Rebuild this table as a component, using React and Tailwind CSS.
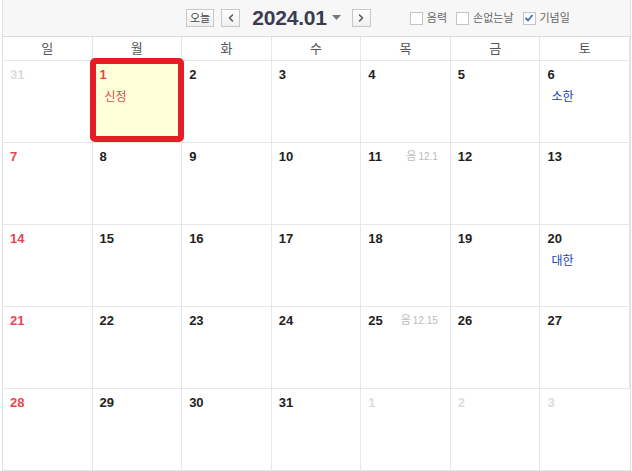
import { ChevronLeft, ChevronRight } from 'lucide-react';

const days = ['일', '월', '화', '수', '목', '금', '토'];

const weeks = [
  [{ d: 31, out: true }, { d: 1, holiday: '신정', today: true }, { d: 2 }, { d: 3 }, { d: 4 }, { d: 5 }, { d: 6, memo: '소한' }],
  [{ d: 7 }, { d: 8 }, { d: 9 }, { d: 10 }, { d: 11, lunar: '12.1' }, { d: 12 }, { d: 13 }],
  [{ d: 14 }, { d: 15 }, { d: 16 }, { d: 17 }, { d: 18 }, { d: 19 }, { d: 20, memo: '대한' }],
  [{ d: 21 }, { d: 22 }, { d: 23 }, { d: 24 }, { d: 25, lunar: '12.15' }, { d: 26 }, { d: 27 }],
  [{ d: 28 }, { d: 29 }, { d: 30 }, { d: 31 }, { d: 1, out: true }, { d: 2, out: true }, { d: 3, out: true }],
];

const Check = ({ checked, label }) => (
  <label className="flex items-center gap-[4px] text-[11px] text-[#666]">
    <span className="w-[13px] h-[13px] border border-[#c4c4c4] bg-white flex items-center justify-center">
      {checked && (
        <svg width="10" height="10" viewBox="0 0 10 10">
          <path d="M1.5 5 L4 7.5 L8.5 2" fill="none" stroke="#3d6fb8" strokeWidth="1.8" />
        </svg>
      )}
    </span>
    {label}
  </label>
);

const Cell = ({ cell, col }) => {
  let color = 'text-[#222]';
  if (cell.out) color = 'text-[#ddd]';
  else if (col === 0 || cell.holiday) color = 'text-[#e8454f]';

  return (
    <div className="relative h-[82px] border-r border-b border-[#e6e6e6] last:border-r-0">
      {cell.today && (
        <div className="absolute left-[-3px] top-[-3px] w-[94px] h-[84px] border-[6px] border-[#e51e25] rounded-[5px] bg-[#ffffd9]" />
      )}
      <div className="relative pl-[7px] pt-[4px] flex items-start justify-between pr-[12px]">
        <span className={`text-[13px] font-bold ${color}`}>{cell.d}</span>
        {cell.lunar && (
          <span className="text-[#bbb] mt-[1px] flex items-baseline gap-[2px]">
            <span className="text-[11px]">음</span>
            <span className="text-[10px]">{cell.lunar}</span>
          </span>
        )}
      </div>
      {cell.holiday && (
        <div className="relative pl-[12px] mt-[3px] text-[12px] text-[#e8454f]">{cell.holiday}</div>
      )}
      {cell.memo && (
        <div className="relative pl-[11px] mt-[3px] text-[12px] text-[#2142b8]">{cell.memo}</div>
      )}
    </div>
  );
};

const App = () => {
  return (
    <div
      className="w-[632px] h-[471px] bg-white overflow-hidden"
      style={{ fontFamily: '"Liberation Sans", "Noto Sans CJK KR", sans-serif' }}
    >
      <div className="ml-[2px] w-[629px] border-l border-r border-b border-[#e0e0e0]">
        <div className="h-[37px] bg-[#f7f7f7] border-b border-[#dcdcdc] flex items-center">
          <div className="ml-[183px] flex items-center">
            <button className="h-[18px] px-[3px] border border-[#c8c8c8] bg-gradient-to-b from-white to-[#f0f0f0] text-[11px] text-[#444] leading-none">
              오늘
            </button>
            <button className="ml-[7px] w-[19px] h-[18px] border border-[#c8c8c8] bg-gradient-to-b from-white to-[#f0f0f0] flex items-center justify-center text-[#555]">
              <ChevronLeft size={12} strokeWidth={3} />
            </button>
            <span className="ml-[12px] text-[21px] font-bold text-[#3a3c52] tracking-[-0.2px]">2024.01</span>
            <svg className="ml-[5px]" width="9" height="6" viewBox="0 0 9 6">
              <path d="M0 0 H9 L4.5 5 Z" fill="#777" />
            </svg>
            <button className="ml-[11px] w-[19px] h-[18px] border border-[#c8c8c8] bg-gradient-to-b from-white to-[#f0f0f0] flex items-center justify-center text-[#555]">
              <ChevronRight size={12} strokeWidth={3} />
            </button>
          </div>
          <div className="ml-[39px] flex items-center gap-[9px]">
            <Check label="음력" />
            <Check label="손없는날" />
            <Check label="기념일" checked />
          </div>
        </div>
        <div className="grid grid-cols-7">
          {days.map((d) => (
            <div key={d} className="h-[24px] flex items-center justify-center text-[13px] text-[#555] border-r border-b border-[#e6e6e6] last:border-r-0">
              {d}
            </div>
          ))}
          {weeks.map((w, i) =>
            w.map((cell, j) => <Cell key={`${i}-${j}`} cell={cell} col={j} />)
          )}
        </div>
      </div>
    </div>
  );
};

export default App;
